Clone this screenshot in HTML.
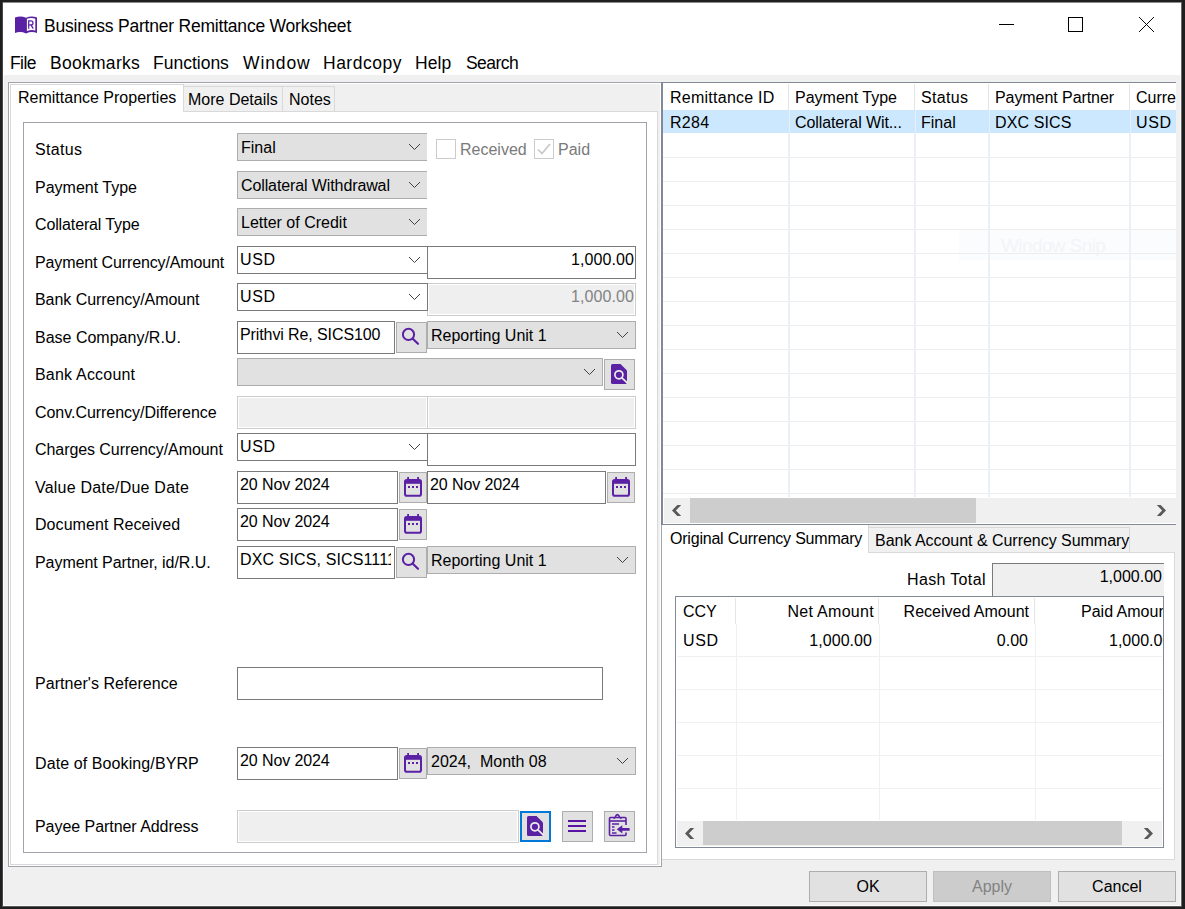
<!DOCTYPE html>
<html>
<head>
<meta charset="utf-8">
<title>Business Partner Remittance Worksheet</title>
<style>
*{box-sizing:border-box;margin:0;padding:0}
html,body{width:1185px;height:909px;overflow:hidden}
body{background:#f0f0f0;font-family:"Liberation Sans",sans-serif;font-size:16px;color:#000;position:relative}
.a{position:absolute}
.t{position:absolute;white-space:pre;line-height:18px;margin-top:1px}
.lbl{position:absolute;left:35px;white-space:pre;line-height:18px;margin-top:1px}
.cg{position:absolute;height:28px;background:#e1e1e1;border:1px solid #adadad;overflow:hidden}
.cg span,.cw span{position:absolute;left:3px;white-space:pre;line-height:18px}
.cg span{top:5px}
.cw{position:absolute;height:28px;background:#fff;border:1px solid #7a7a7a;overflow:hidden}
.cw span{top:4px;left:2px}
.chev{position:absolute;right:6px;top:9px;width:13px;height:8px}
.tf{position:absolute;height:33px;background:#fff;border:1px solid #7a7a7a;overflow:hidden}
.tf span{position:absolute;left:2px;top:4px;white-space:pre;line-height:18px}
.tf span.r{left:auto;right:1px;letter-spacing:0.1px}
.df{position:absolute;height:33px;background:#efefef;border:1px solid #cccccc;box-shadow:inset 0 0 0 1px #fff;overflow:hidden}
.df span{letter-spacing:0.1px;position:absolute;right:1px;top:4px;white-space:pre;line-height:18px;color:#838383}
.btn{position:absolute;background:#e1e1e1;border:1px solid #adadad}
.btn svg{position:absolute;left:-1px;top:-1px}
.pb{position:absolute;top:871px;height:31px;width:118px;background:#e1e1e1;border:1px solid #adadad;text-align:center;line-height:29px}
.hl{position:absolute;height:1px}
.vl{position:absolute;width:1px}
</style>
</head>
<body>
<!-- title + menu -->
<div class="a" style="left:0;top:0;width:1185px;height:75px;background:#fff"></div>
<svg class="a" style="left:14px;top:15px" width="24" height="20" viewBox="0 0 24 20">
  <path d="M1 2.6 Q6.5 0.2 12 2.8 L12 18.5 Q6.5 15.8 1 18 Z" fill="#5b21a5"/>
  <path d="M12 2.8 Q17.5 0.2 23 2.6 L23 18 Q17.5 15.8 12 18.5 Z" fill="#5b21a5"/>
  <path d="M12.9 3.8 Q17.5 2.4 21.3 3.8 L21.3 15.5 Q17.5 14.3 12.9 16 Z" fill="#fff"/>
  <path d="M14.7 13.7 V5.9 H17 Q19 5.9 19 7.9 Q19 9.9 17 9.9 H14.7 M16.9 9.9 L19.3 13.7" fill="none" stroke="#5b21a5" stroke-width="1.25"/>
</svg>
<div class="t" style="left:44px;top:15px;font-size:17.5px;line-height:20px;letter-spacing:-0.21px">Business Partner Remittance Worksheet</div>
<!-- window controls -->
<div class="a" style="left:999px;top:24px;width:15px;height:1px;background:#000"></div>
<div class="a" style="left:1068px;top:17px;width:15px;height:15px;border:1px solid #000"></div>
<svg class="a" style="left:1138px;top:16px" width="17" height="17" viewBox="0 0 17 17"><path d="M1 1 L16 16 M16 1 L1 16" stroke="#000" stroke-width="0.95" fill="none"/></svg>
<!-- menu -->
<div class="t" style="left:10px;top:52px;font-size:17.5px;line-height:20px;letter-spacing:-0.6px">File</div>
<div class="t" style="left:50px;top:52px;font-size:17.5px;line-height:20px;letter-spacing:0.28px">Bookmarks</div>
<div class="t" style="left:153px;top:52px;font-size:17.5px;line-height:20px">Functions</div>
<div class="t" style="left:243px;top:52px;font-size:17.5px;line-height:20px;letter-spacing:0.9px">Window</div>
<div class="t" style="left:323px;top:52px;font-size:17.5px;line-height:20px;letter-spacing:0.5px">Hardcopy</div>
<div class="t" style="left:415px;top:52px;font-size:17.5px;line-height:20px;letter-spacing:0.1px">Help</div>
<div class="t" style="left:466px;top:52px;font-size:17.5px;line-height:20px;letter-spacing:-0.55px">Search</div>

<!-- LEFT container -->
<div class="a" style="left:8px;top:82px;width:654px;height:785px;border:1px solid #a0a3ab;box-shadow:inset 0 0 0 1px #fff"></div>
<!-- tab pane -->
<div class="a" style="left:10px;top:111px;width:648px;height:754px;background:#fff;border:1px solid #d9d9d9"></div>
<!-- tabs -->
<div class="a" style="left:183px;top:86px;width:100px;height:26px;background:#f0f0f0;border:1px solid #d9d9d9"></div>
<div class="a" style="left:282px;top:86px;width:53px;height:26px;background:#f0f0f0;border:1px solid #d9d9d9"></div>
<div class="a" style="left:10px;top:84px;width:174px;height:28px;background:#fff;border:1px solid #d9d9d9;border-bottom:none"></div>
<div class="t" style="left:18px;top:88px">Remittance Properties</div>
<div class="t" style="left:188px;top:90px">More Details</div>
<div class="t" style="left:289px;top:90px">Notes</div>
<!-- group box -->
<div class="a" style="left:23px;top:122px;width:624px;height:731px;border:1px solid #a0a3ab"></div>

<!--FORM-START-->
<!-- labels -->
<div class="lbl" style="top:140px;letter-spacing:0.35px">Status</div>
<div class="lbl" style="top:178px">Payment Type</div>
<div class="lbl" style="top:215px;letter-spacing:-0.13px">Collateral Type</div>
<div class="lbl" style="top:253px;letter-spacing:-0.13px">Payment Currency/Amount</div>
<div class="lbl" style="top:290px;letter-spacing:-0.05px">Bank Currency/Amount</div>
<div class="lbl" style="top:328px">Base Company/R.U.</div>
<div class="lbl" style="top:365px;letter-spacing:0.2px">Bank Account</div>
<div class="lbl" style="top:403px;letter-spacing:-0.04px">Conv.Currency/Difference</div>
<div class="lbl" style="top:440px;letter-spacing:-0.07px">Charges Currency/Amount</div>
<div class="lbl" style="top:478px;letter-spacing:0.21px">Value Date/Due Date</div>
<div class="lbl" style="top:515px;letter-spacing:0.06px">Document Received</div>
<div class="lbl" style="top:553px;letter-spacing:-0.06px">Payment Partner, id/R.U.</div>
<div class="lbl" style="top:674px;letter-spacing:0.05px">Partner's Reference</div>
<div class="lbl" style="top:754px;letter-spacing:0.1px">Date of Booking/BYRP</div>
<div class="lbl" style="top:817px;letter-spacing:-0.05px">Payee Partner Address</div>

<!-- r1 -->
<div class="cg" style="left:237px;top:133px;width:190px;border-right:none"><span>Final</span><svg class="chev" viewBox="0 0 13 8"><path d="M1 1 L6.5 6.5 L12 1" stroke="#383838" stroke-width="0.95" fill="none"/></svg></div>
<div class="a" style="left:436px;top:139px;width:20px;height:20px;background:#fff;border:1px solid #cccccc"></div>
<div class="t" style="left:460px;top:140px;color:#7a7a7a">Received</div>
<div class="a" style="left:534px;top:139px;width:20px;height:20px;background:#fff;border:1px solid #cccccc"></div>
<svg class="a" style="left:534px;top:139px" width="20" height="20" viewBox="0 0 20 20"><path d="M4 10.5 L8 14.5 L16 5" stroke="#c8c8c8" stroke-width="1.7" fill="none"/></svg>
<div class="t" style="left:558px;top:140px;color:#7a7a7a">Paid</div>
<!-- r2 -->
<div class="cg" style="left:237px;top:171px;width:190px;border-right:none"><span style="letter-spacing:-0.11px">Collateral Withdrawal</span><svg class="chev" viewBox="0 0 13 8"><path d="M1 1 L6.5 6.5 L12 1" stroke="#383838" stroke-width="0.95" fill="none"/></svg></div>
<!-- r3 -->
<div class="cg" style="left:237px;top:208px;width:190px;border-right:none"><span>Letter of Credit</span><svg class="chev" viewBox="0 0 13 8"><path d="M1 1 L6.5 6.5 L12 1" stroke="#383838" stroke-width="0.95" fill="none"/></svg></div>
<!-- r4 -->
<div class="tf" style="left:427px;top:246px;width:209px"><span class="r">1,000.00</span></div>
<div class="cw" style="left:237px;top:246px;width:191px"><span style="letter-spacing:0.6px">USD</span><svg class="chev" style="right:6.4px" viewBox="0 0 13 8"><path d="M1 1 L6.5 6.5 L12 1" stroke="#383838" stroke-width="0.95" fill="none"/></svg></div>
<!-- r5 -->
<div class="df" style="left:427px;top:283px;width:209px"><span>1,000.00</span></div>
<div class="cw" style="left:237px;top:283px;width:191px"><span style="letter-spacing:0.6px">USD</span><svg class="chev" style="right:6.4px" viewBox="0 0 13 8"><path d="M1 1 L6.5 6.5 L12 1" stroke="#383838" stroke-width="0.95" fill="none"/></svg></div>
<!-- r6 -->
<div class="tf" style="left:237px;top:321px;width:158px"><span style="letter-spacing:-0.1px">Prithvi Re, SICS100</span></div>
<div class="btn" style="left:396px;top:322px;width:31px;height:31px"><svg width="31" height="31" viewBox="0 0 31 31"><circle cx="12.5" cy="12.4" r="5.6" stroke="#5b21a5" stroke-width="2" fill="none"/><path d="M16.8 16.8 L22 21.8" stroke="#5b21a5" stroke-width="2.2" stroke-linecap="round"/></svg></div>
<div class="cg" style="left:427px;top:321px;width:209px"><span>Reporting Unit 1</span><svg class="chev" viewBox="0 0 13 8"><path d="M1 1 L6.5 6.5 L12 1" stroke="#383838" stroke-width="0.95" fill="none"/></svg></div>
<!-- r7 -->
<div class="cg" style="left:237px;top:358px;width:366px"><svg class="chev" viewBox="0 0 13 8"><path d="M1 1 L6.5 6.5 L12 1" stroke="#383838" stroke-width="0.95" fill="none"/></svg></div>
<div class="btn" style="left:604px;top:359px;width:31px;height:31px"><svg width="31" height="31" viewBox="0 0 31 31"><path d="M8.5 5 L16.5 5 L23 11.5 L23 23.5 Q23 25 21.5 25 L8.5 25 Q7 25 7 23.5 L7 6.5 Q7 5 8.5 5 Z" fill="#5b21a5"/><circle cx="14.9" cy="15.8" r="4" stroke="#ecede6" stroke-width="1.7" fill="none"/><path d="M17.9 18.8 L23.5 24.2" stroke="#ecede6" stroke-width="1.7"/></svg></div>
<!-- r8 -->
<div class="df" style="left:237px;top:396px;width:191px"></div>
<div class="df" style="left:427px;top:396px;width:209px"></div>
<!-- r9 -->
<div class="tf" style="left:427px;top:433px;width:209px"></div>
<div class="cw" style="left:237px;top:433px;width:191px"><span style="letter-spacing:0.6px">USD</span><svg class="chev" style="right:6.4px" viewBox="0 0 13 8"><path d="M1 1 L6.5 6.5 L12 1" stroke="#383838" stroke-width="0.95" fill="none"/></svg></div>
<!-- r10 -->
<div class="tf" style="left:237px;top:471px;width:161px"><span style="letter-spacing:-0.1px">20 Nov 2024</span></div>
<div class="btn cal" style="left:399px;top:472px;width:28px;height:31px"><svg width="28" height="31" viewBox="0 0 28 31"><rect x="6" y="8" width="16" height="15.7" rx="1.8" fill="none" stroke="#5b21a5" stroke-width="2"/><rect x="6" y="8" width="16" height="3.8" fill="#5b21a5"/><rect x="8.2" y="5" width="1.8" height="3.2" fill="#5b21a5"/><rect x="18.2" y="5" width="1.8" height="3.2" fill="#5b21a5"/><rect x="9" y="14" width="2" height="2" fill="#5b21a5"/><rect x="13" y="14" width="2" height="2" fill="#5b21a5"/><rect x="17" y="14" width="2" height="2" fill="#5b21a5"/></svg></div>
<div class="tf" style="left:427px;top:471px;width:179px"><span style="letter-spacing:-0.1px">20 Nov 2024</span></div>
<div class="btn cal" style="left:607px;top:472px;width:28px;height:31px"><svg width="28" height="31" viewBox="0 0 28 31"><rect x="6" y="8" width="16" height="15.7" rx="1.8" fill="none" stroke="#5b21a5" stroke-width="2"/><rect x="6" y="8" width="16" height="3.8" fill="#5b21a5"/><rect x="8.2" y="5" width="1.8" height="3.2" fill="#5b21a5"/><rect x="18.2" y="5" width="1.8" height="3.2" fill="#5b21a5"/><rect x="9" y="14" width="2" height="2" fill="#5b21a5"/><rect x="13" y="14" width="2" height="2" fill="#5b21a5"/><rect x="17" y="14" width="2" height="2" fill="#5b21a5"/></svg></div>
<!-- r11 -->
<div class="tf" style="left:237px;top:508px;width:161px"><span style="letter-spacing:-0.1px">20 Nov 2024</span></div>
<div class="btn cal" style="left:399px;top:509px;width:28px;height:31px"><svg width="28" height="31" viewBox="0 0 28 31"><rect x="6" y="8" width="16" height="15.7" rx="1.8" fill="none" stroke="#5b21a5" stroke-width="2"/><rect x="6" y="8" width="16" height="3.8" fill="#5b21a5"/><rect x="8.2" y="5" width="1.8" height="3.2" fill="#5b21a5"/><rect x="18.2" y="5" width="1.8" height="3.2" fill="#5b21a5"/><rect x="9" y="14" width="2" height="2" fill="#5b21a5"/><rect x="13" y="14" width="2" height="2" fill="#5b21a5"/><rect x="17" y="14" width="2" height="2" fill="#5b21a5"/></svg></div>
<!-- r12 -->
<div class="tf" style="left:237px;top:546px;width:158px"><div class="a" style="left:0;top:0;width:153px;height:31px;overflow:hidden"><span style="letter-spacing:0.12px">DXC SICS, SICS1111</span></div></div>
<div class="btn" style="left:396px;top:547px;width:31px;height:31px"><svg width="31" height="31" viewBox="0 0 31 31"><circle cx="12.5" cy="12.4" r="5.6" stroke="#5b21a5" stroke-width="2" fill="none"/><path d="M16.8 16.8 L22 21.8" stroke="#5b21a5" stroke-width="2.2" stroke-linecap="round"/></svg></div>
<div class="cg" style="left:427px;top:546px;width:209px"><span>Reporting Unit 1</span><svg class="chev" viewBox="0 0 13 8"><path d="M1 1 L6.5 6.5 L12 1" stroke="#383838" stroke-width="0.95" fill="none"/></svg></div>
<!-- partner ref -->
<div class="tf" style="left:237px;top:667px;width:366px"></div>
<!-- booking -->
<div class="tf" style="left:237px;top:747px;width:161px"><span style="letter-spacing:-0.1px">20 Nov 2024</span></div>
<div class="btn cal" style="left:399px;top:748px;width:28px;height:31px"><svg width="28" height="31" viewBox="0 0 28 31"><rect x="6" y="8" width="16" height="15.7" rx="1.8" fill="none" stroke="#5b21a5" stroke-width="2"/><rect x="6" y="8" width="16" height="3.8" fill="#5b21a5"/><rect x="8.2" y="5" width="1.8" height="3.2" fill="#5b21a5"/><rect x="18.2" y="5" width="1.8" height="3.2" fill="#5b21a5"/><rect x="9" y="14" width="2" height="2" fill="#5b21a5"/><rect x="13" y="14" width="2" height="2" fill="#5b21a5"/><rect x="17" y="14" width="2" height="2" fill="#5b21a5"/></svg></div>
<div class="cg" style="left:427px;top:747px;width:209px"><span>2024,  Month 08</span><svg class="chev" viewBox="0 0 13 8"><path d="M1 1 L6.5 6.5 L12 1" stroke="#383838" stroke-width="0.95" fill="none"/></svg></div>
<!-- payee -->
<div class="df" style="left:237px;top:810px;width:282px"></div>
<div class="btn" style="left:520px;top:811px;width:31px;height:31px;border:2px solid #0078d7"><svg style="left:-2px;top:-2px" width="31" height="31" viewBox="0 0 31 31"><path d="M8.5 5 L16.5 5 L23 11.5 L23 23.5 Q23 25 21.5 25 L8.5 25 Q7 25 7 23.5 L7 6.5 Q7 5 8.5 5 Z" fill="#5b21a5"/><circle cx="14.9" cy="15.8" r="4" stroke="#ecede6" stroke-width="1.7" fill="none"/><path d="M17.9 18.8 L23.5 24.2" stroke="#ecede6" stroke-width="1.7"/></svg></div>
<div class="btn" style="left:562px;top:811px;width:31px;height:31px"><svg width="31" height="31" viewBox="0 0 31 31"><path d="M6 10 H24 M6 15 H24 M6 20 H24" stroke="#5a12a0" stroke-width="2"/></svg></div>
<div class="btn" style="left:604px;top:811px;width:31px;height:31px"><svg width="31" height="31" viewBox="0 0 31 31"><g fill="none" stroke="#5b21a5" stroke-width="1.6"><path d="M22 14 V7.5 Q22 6.5 21 6.5 H6.5 Q5.5 6.5 5.5 7.5 V23.5 Q5.5 24.5 6.5 24.5 H21 Q22 24.5 22 23.5 V21.5"/><path d="M5.5 10 H22"/><path d="M9.5 7.5 Q11.5 7 11.8 5 Q13.3 2.2 15 5 Q15.3 7 17.5 7.5"/></g><path d="M8 13 H15 M8 16 H10.5 M8 19 H10.5 M8 22 H12.5" stroke="#5b21a5" stroke-width="1.3"/><path d="M12.8 18.3 L18.3 14.2 V16.9 H25.6 V19.7 H18.3 V22.4 Z" fill="#5b21a5"/></svg></div>
<!--FORM-END-->

<!--RIGHT-START-->
<!-- top grid -->
<div class="a" style="left:663px;top:83px;width:513px;height:441px;background:#fff"></div>
<div class="a" style="left:959px;top:230px;width:217px;height:30px;background:#fbfcfe"></div>
<div class="t" style="left:1001px;top:234px;color:#f3f4f6;font-size:19px;line-height:22px;letter-spacing:-0.6px">Window Snip</div>
<div class="a" style="left:663px;top:110px;width:513px;height:23px;background:#cce8ff"></div>
<div class="hl" style="left:663px;top:157px;width:513px;background:#ededed"></div>
<div class="hl" style="left:663px;top:181px;width:513px;background:#ededed"></div>
<div class="hl" style="left:663px;top:205px;width:513px;background:#ededed"></div>
<div class="hl" style="left:663px;top:229px;width:513px;background:#ededed"></div>
<div class="hl" style="left:663px;top:253px;width:513px;background:#ededed"></div>
<div class="hl" style="left:663px;top:277px;width:513px;background:#ededed"></div>
<div class="hl" style="left:663px;top:301px;width:513px;background:#ededed"></div>
<div class="hl" style="left:663px;top:325px;width:513px;background:#ededed"></div>
<div class="hl" style="left:663px;top:349px;width:513px;background:#ededed"></div>
<div class="hl" style="left:663px;top:373px;width:513px;background:#ededed"></div>
<div class="hl" style="left:663px;top:397px;width:513px;background:#ededed"></div>
<div class="hl" style="left:663px;top:421px;width:513px;background:#ededed"></div>
<div class="hl" style="left:663px;top:445px;width:513px;background:#ededed"></div>
<div class="hl" style="left:663px;top:469px;width:513px;background:#ededed"></div>
<div class="hl" style="left:663px;top:493px;width:513px;background:#ededed"></div>
<div class="vl" style="left:788px;top:84px;height:26px;background:#e5e5e5"></div><div class="vl" style="left:789px;top:110px;height:23px;background:#ebeff4"></div><div class="vl" style="left:788px;top:133px;height:364px;background:#e8f0fb"></div><div class="vl" style="left:789px;top:133px;height:364px;background:#efefef"></div>
<div class="vl" style="left:914px;top:84px;height:26px;background:#e5e5e5"></div><div class="vl" style="left:915px;top:110px;height:23px;background:#ebeff4"></div><div class="vl" style="left:914px;top:133px;height:364px;background:#e8f0fb"></div><div class="vl" style="left:915px;top:133px;height:364px;background:#efefef"></div>
<div class="vl" style="left:988px;top:84px;height:26px;background:#e5e5e5"></div><div class="vl" style="left:989px;top:110px;height:23px;background:#ebeff4"></div><div class="vl" style="left:988px;top:133px;height:364px;background:#e8f0fb"></div><div class="vl" style="left:989px;top:133px;height:364px;background:#efefef"></div>
<div class="vl" style="left:1129px;top:84px;height:26px;background:#e5e5e5"></div><div class="vl" style="left:1130px;top:110px;height:23px;background:#ebeff4"></div><div class="vl" style="left:1129px;top:133px;height:364px;background:#e8f0fb"></div><div class="vl" style="left:1130px;top:133px;height:364px;background:#efefef"></div>
<div class="t" style="left:670px;top:88px;letter-spacing:0.25px">Remittance ID</div>
<div class="t" style="left:795px;top:88px">Payment Type</div>
<div class="t" style="left:921px;top:88px;letter-spacing:0.35px">Status</div>
<div class="t" style="left:995px;top:88px;letter-spacing:-0.07px">Payment Partner</div>
<div class="t" style="left:1136px;top:88px">Curre</div>
<div class="t" style="left:670px;top:113px;letter-spacing:0.3px">R284</div>
<div class="t" style="left:795px;top:113px;letter-spacing:-0.1px">Collateral Wit...</div>
<div class="t" style="left:921px;top:113px">Final</div>
<div class="t" style="left:995px;top:113px;letter-spacing:0.12px">DXC SICS</div>
<div class="t" style="left:1136px;top:113px;letter-spacing:0.6px">USD</div>
<div class="a" style="left:664px;top:498px;width:512px;height:25px;background:#f0f0f0"></div>
<div class="a" style="left:690px;top:498px;width:286px;height:25px;background:#cdcdcd"></div>
<svg class="a" style="left:671px;top:504px" width="12" height="13" viewBox="0 0 12 13"><path d="M1 6.5 L6.3 0.9 L10.2 0.9 L4.9 6.5 L10.2 12.1 L6.3 12.1 Z" fill="#595959"/></svg>
<svg class="a" style="left:1156px;top:504px" width="12" height="13" viewBox="0 0 12 13"><path d="M10 6.5 L4.7 0.9 L0.8 0.9 L6.1 6.5 L0.8 12.1 L4.7 12.1 Z" fill="#595959"/></svg>
<div class="a" style="left:661px;top:82px;width:2px;height:443px;background:#828895"></div>
<div class="hl" style="left:661px;top:82px;width:515px;background:#828895"></div>
<div class="hl" style="left:661px;top:524px;width:515px;background:#828895"></div>
<!-- bottom tabs -->
<div class="a" style="left:662px;top:552px;width:513px;height:308px;background:#fff;border:1px solid #d9d9d9;border-left:none"></div>
<div class="a" style="left:868px;top:527px;width:262px;height:26px;background:#f0f0f0;border:1px solid #d9d9d9"></div>
<div class="a" style="left:662px;top:525px;width:207px;height:28px;background:#fff;border-right:1px solid #d9d9d9"></div>
<div class="t" style="left:670px;top:529px;letter-spacing:-0.21px">Original Currency Summary</div>
<div class="t" style="left:875px;top:531px;letter-spacing:-0.03px">Bank Account &amp; Currency Summary</div>
<div class="t" style="left:907px;top:570px;letter-spacing:0.35px">Hash Total</div>
<div class="a" style="left:992px;top:563px;width:172px;height:34px;background:#efefef;border:1px solid #7a7a7a;border-right:none;overflow:hidden"><span class="t" style="right:2px;top:3px">1,000.00</span></div>
<div class="a" style="left:675px;top:596px;width:489px;height:252px;background:#fff;border:1px solid #828895;overflow:hidden"></div>
<div class="hl" style="left:677px;top:656px;width:485px;background:#f0f0f0"></div>
<div class="hl" style="left:677px;top:689px;width:485px;background:#f0f0f0"></div>
<div class="hl" style="left:677px;top:722px;width:485px;background:#f0f0f0"></div>
<div class="hl" style="left:677px;top:755px;width:485px;background:#f0f0f0"></div>
<div class="hl" style="left:677px;top:788px;width:485px;background:#f0f0f0"></div>
<div class="vl" style="left:735px;top:598px;height:26px;background:#e5e5e5"></div><div class="vl" style="left:736px;top:624px;height:196px;background:#f0f0f0"></div>
<div class="vl" style="left:878px;top:598px;height:26px;background:#e5e5e5"></div><div class="vl" style="left:879px;top:624px;height:196px;background:#f0f0f0"></div>
<div class="vl" style="left:1034px;top:598px;height:26px;background:#e5e5e5"></div><div class="vl" style="left:1035px;top:624px;height:196px;background:#f0f0f0"></div>
<div class="t" style="left:683px;top:602px">CCY</div>
<div class="t" style="right:311px;top:602px;letter-spacing:0.3px">Net Amount</div>
<div class="t" style="right:156px;top:602px">Received Amount</div>
<div class="a" style="left:1036px;top:597px;width:127px;height:60px;overflow:hidden"><span class="t" style="left:45px;top:5px">Paid Amount</span><span class="t" style="left:73px;top:34px">1,000.00</span></div>
<div class="t" style="left:683px;top:631px;letter-spacing:0.6px">USD</div>
<div class="t" style="right:313px;top:631px;letter-spacing:0.05px">1,000.00</div>
<div class="t" style="right:157px;top:631px">0.00</div>
<div class="a" style="left:677px;top:821px;width:485px;height:25px;background:#f0f0f0"></div>
<div class="a" style="left:703px;top:821px;width:419px;height:24px;background:#cdcdcd"></div>
<svg class="a" style="left:684px;top:827px" width="12" height="13" viewBox="0 0 12 13"><path d="M1 6.5 L6.3 0.9 L10.2 0.9 L4.9 6.5 L10.2 12.1 L6.3 12.1 Z" fill="#595959"/></svg>
<svg class="a" style="left:1143px;top:827px" width="12" height="13" viewBox="0 0 12 13"><path d="M10 6.5 L4.7 0.9 L0.8 0.9 L6.1 6.5 L0.8 12.1 L4.7 12.1 Z" fill="#595959"/></svg>
<!--RIGHT-END-->

<!-- bottom buttons -->
<div class="pb" style="left:809px">OK</div>
<div class="pb" style="left:933px;background:#cccccc;border-color:#bfbfbf;color:#838383">Apply</div>
<div class="pb" style="left:1058px">Cancel</div>

<!-- window frame -->
<div class="a" style="left:1180px;top:75px;width:1px;height:831px;background:#fafafa"></div>
<div class="a" style="left:3px;top:905px;width:1178px;height:1px;background:#fafafa"></div>
<div class="a" style="left:3px;top:75px;width:1px;height:831px;background:#fafafa"></div>
<div class="a" style="left:0;top:2px;width:1185px;height:1px;background:#8c8c8c"></div>
<div class="a" style="left:2px;top:0;width:1px;height:909px;background:#484848"></div>
<div class="a" style="left:1181px;top:0;width:1px;height:909px;background:#6a6a6a"></div>
<div class="a" style="left:0;top:906px;width:1185px;height:1px;background:#5a5a5a"></div>
<div class="a" style="left:0;top:0;width:1185px;height:2px;background:#1f1f1f"></div>
<div class="a" style="left:0;top:0;width:2px;height:909px;background:#1f1f1f"></div>
<div class="a" style="left:1182px;top:0;width:3px;height:909px;background:#1f1f1f"></div>
<div class="a" style="left:0;top:907px;width:1185px;height:2px;background:#1f1f1f"></div>
</body>
</html>
